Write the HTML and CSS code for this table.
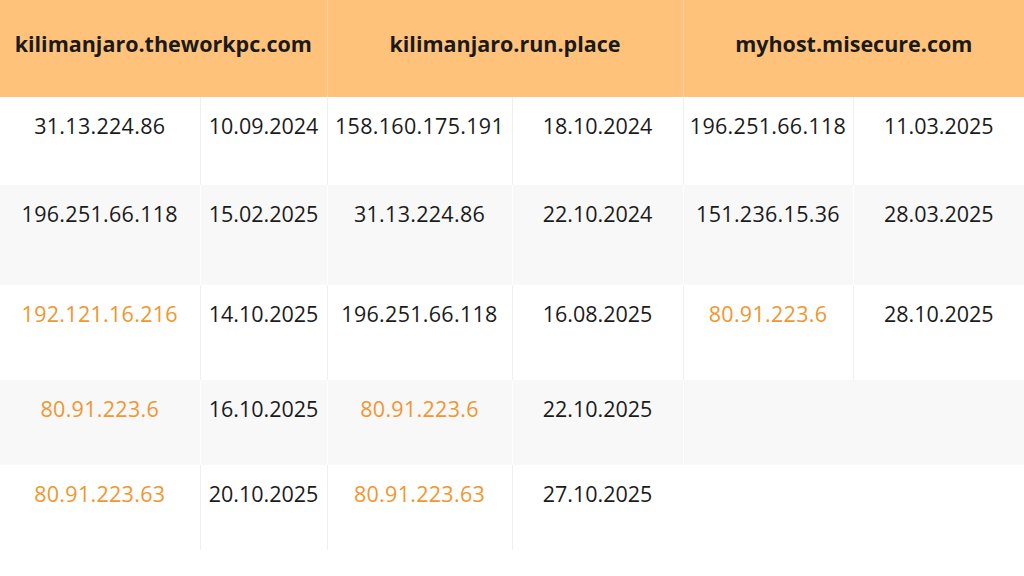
FILE: index.html
```html
<!DOCTYPE html>
<html>
<head>
<meta charset="utf-8">
<link rel="stylesheet" href="styles.css">
</head>
<body>
<table class="hosts">
  <colgroup>
    <col class="c-ip1"><col class="c-d1">
    <col class="c-ip2"><col class="c-d2">
    <col class="c-ip3"><col class="c-d3">
  </colgroup>
  <thead>
    <tr class="head">
      <th colspan="2">kilimanjaro.theworkpc.com</th>
      <th colspan="2">kilimanjaro.run.place</th>
      <th colspan="2">myhost.misecure.com</th>
    </tr>
  </thead>
  <tbody>
    <tr class="row r1">
      <td class="ip">31.13.224.86</td><td>10.09.2024</td>
      <td class="ip">158.160.175.191</td><td>18.10.2024</td>
      <td class="ip">196.251.66.118</td><td>11.03.2025</td>
    </tr>
    <tr class="row r2 alt">
      <td class="ip">196.251.66.118</td><td>15.02.2025</td>
      <td class="ip">31.13.224.86</td><td>22.10.2024</td>
      <td class="ip">151.236.15.36</td><td>28.03.2025</td>
    </tr>
    <tr class="row r3">
      <td class="ip new">192.121.16.216</td><td>14.10.2025</td>
      <td class="ip">196.251.66.118</td><td>16.08.2025</td>
      <td class="ip new">80.91.223.6</td><td>28.10.2025</td>
    </tr>
    <tr class="row r4 alt">
      <td class="ip new">80.91.223.6</td><td>16.10.2025</td>
      <td class="ip new">80.91.223.6</td><td>22.10.2025</td>
      <td class="empty" colspan="2"></td>
    </tr>
    <tr class="row r5">
      <td class="ip new">80.91.223.63</td><td>20.10.2025</td>
      <td class="ip new">80.91.223.63</td><td>27.10.2025</td>
      <td class="empty blank" colspan="2"></td>
    </tr>
  </tbody>
</table>
</body>
</html>
```

FILE: styles.css
```css
html, body {
  margin: 0;
  padding: 0;
  background: #ffffff;
}

.hosts {
  width: 1024px;
  table-layout: fixed;
  border-collapse: collapse;
  border-spacing: 0;
  font-family: "Open Sans", "Noto Sans", sans-serif;
  color: #1b1b1b;
}

.c-ip1 { width: 200px; }
.c-d1 { width: 127px; }
.c-ip2 { width: 185px; }
.c-d2 { width: 171px; }
.c-ip3 { width: 170px; }
.c-d3 { width: 171px; }

.head th {
  height: 97px;
  padding: 0 0 10px 0;
  box-sizing: border-box;
  background: #ffc27a;
  font-size: 21.5px;
  font-weight: 700;
  color: #1a1a1a;
  text-align: center;
  vertical-align: middle;
  border-left: 1px solid #ffd6a4;
}

.head th:first-child {
  border-left: none;
}

.row td {
  padding: 15px 0 0 0;
  box-sizing: border-box;
  font-size: 21.5px;
  line-height: 28px;
  text-align: center;
  vertical-align: top;
  white-space: nowrap;
  border-left: 1px solid #f0f0f0;
}

.row td:first-child {
  border-left: none;
}

.alt td {
  background: #f8f8f8;
  border-left-color: #ffffff;
}

.row td.ip {
  letter-spacing: 0.3px;
}

.row td.new {
  color: #f2962f;
}

.r1 td { height: 88px; }
.r2 td { height: 100px; }
.r3 td { height: 95px; }
.r4 td { height: 85px; }
.r5 td { height: 85px; }

.row td.blank {
  border-left-color: transparent;
}
```
